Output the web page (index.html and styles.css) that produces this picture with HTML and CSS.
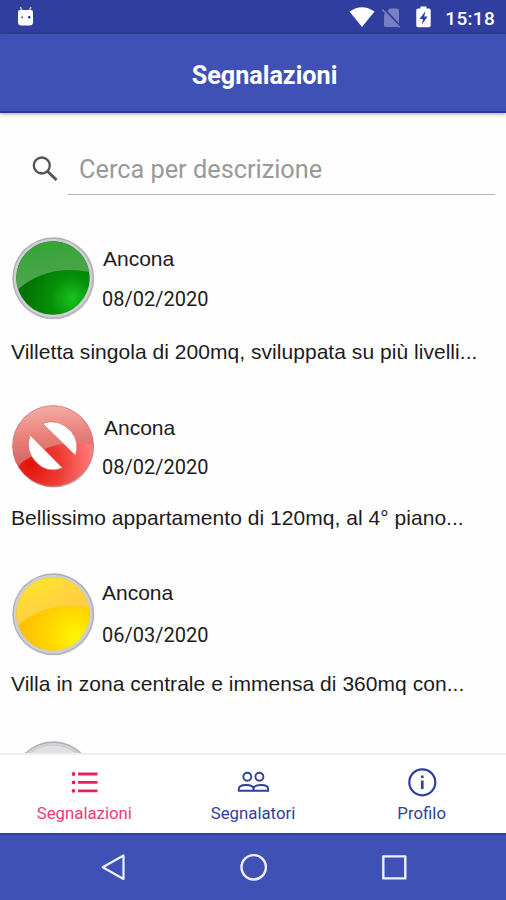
FILE: index.html
```html
<!DOCTYPE html>
<html lang="it">
<head>
  <meta charset="UTF-8">
  <meta name="viewport" content="width=device-width, initial-scale=1.0">
  <title>Segnalazioni</title>
  <link rel="stylesheet" href="styles.css">
</head>
<body>
  <div class="status-bar">
    <svg class="status-android" width="18" height="21" viewBox="0 0 18 21">
      <path d="M3.400 1l1.800 4M14 1l-1.800 4" stroke="#b9c0ea" stroke-width="1.600"/>
      <path d="M1 6q0-2 2-2h11q2 0 2 2v10q0 3.500-3.500 3.500h-8Q1 19.500 1 16z" fill="#fff"/>
      <circle cx="5.200" cy="11.300" r="1" fill="#5a5f98"/>
      <circle cx="12.200" cy="11.300" r="1.200" fill="#1f2b80"/>
    </svg>
    <div class="status-icons">
      <svg class="status-wifi" width="26" height="21" viewBox="0 0 26 21">
        <path d="M0.500 5.500Q13-3 25.500 5.500L13 21z" fill="#fff"/>
      </svg>
      <svg class="status-sim" width="19" height="21" viewBox="0 0 19 21">
        <path d="M2 6.500L7.500 0.500H15q2 0 2 2v15.500q0 1-2 1H4q-2 0-2-1.500z" fill="#7680c3"/>
        <path d="M1.800 0.800l17 18" stroke="#303f9f" stroke-width="2"/>
        <path d="M0.300 1.500l17.500 18" stroke="#7680c3" stroke-width="1.500"/>
      </svg>
      <svg class="status-battery" width="15" height="22" viewBox="0 0 15 22">
        <path d="M4.500 2.500V0.500h6v2H13q1.700 0 1.700 1.500v15.500q0 1.800-1.700 1.800H2q-1.700 0-1.700-1.800V4q0-1.500 1.700-1.500z" fill="#fff"/>
        <path d="M9.500 5L3.500 13h3.400l-1 5.500 5.700-8H8.200z" fill="#303f9f"/>
      </svg>
      <span class="status-time">15:18</span>
    </div>
  </div>

  <header class="toolbar">
    <h1 class="toolbar-title">Segnalazioni</h1>
  </header>

  <main class="content">
    <div class="search">
      <svg class="search-icon" width="26" height="26" viewBox="0 0 26 26" fill="none" stroke="#555">
        <circle cx="9.800" cy="9.500" r="8" stroke-width="2.300"/>
        <path d="M15.500 15.200l9 8.800" stroke-width="3"/>
      </svg>
      <input class="search-input" type="text" placeholder="Cerca per descrizione">
    </div>

    <ul class="list">
      <li class="item item-green">
        <div class="item-head">
          <svg class="badge" width="84" height="84" viewBox="0 0 84 84">
            <use href="#ring"/>
            <circle cx="42" cy="42" r="36.700" fill="url(#green)"/>
            <path d="M0 0H84V37Q33 25 0 60z" fill="url(#greenGloss)" clip-path="url(#face)"/>
          </svg>
          <div class="item-info">
            <div class="item-city">Ancona</div>
            <div class="item-date">08/02/2020</div>
          </div>
        </div>
        <p class="item-text">Villetta singola di 200mq, sviluppata su più livelli...</p>
      </li>
      <li class="item item-red">
        <div class="item-head">
          <svg class="badge" width="84" height="84" viewBox="0 0 84 84">
            <circle cx="42.600" cy="43" r="40.500" fill="#b9b0b0"/>
            <circle cx="42" cy="42" r="40.400" fill="url(#red)"/>
            <path d="M0 0H84V41Q58 37 42 42Q28 46 18 54Q11 57 6 64L0 70z" fill="url(#redGloss)" clip-path="url(#disc)"/>
            <circle cx="42" cy="42" r="40.400" fill="none" stroke="#cf7777" stroke-width="0.700"/>
            <path d="M31.500 19.500Q47 13.500 60 27Q69 38 64.500 51.500z" fill="#fff" stroke="#d56a66" stroke-width="0.700"/>
            <path d="M19 31L51.500 64Q36 70 25 58Q14 47 19 31z" fill="#fff" stroke="#d56a66" stroke-width="0.700"/>
          </svg>
          <div class="item-info">
            <div class="item-city">Ancona</div>
            <div class="item-date">08/02/2020</div>
          </div>
        </div>
        <p class="item-text">Bellissimo appartamento di 120mq, al 4° piano...</p>
      </li>
      <li class="item item-yellow">
        <div class="item-head">
          <svg class="badge" width="84" height="84" viewBox="0 0 84 84">
            <use href="#ring"/>
            <circle cx="42" cy="42" r="36.700" fill="url(#yellow)"/>
            <path d="M0 0H84V37Q33 25 0 60z" fill="url(#yellowGloss)" clip-path="url(#face)"/>
          </svg>
          <div class="item-info">
            <div class="item-city">Ancona</div>
            <div class="item-date">06/03/2020</div>
          </div>
        </div>
        <p class="item-text">Villa in zona centrale e immensa di 360mq con...</p>
      </li>
      <li class="item item-grey">
        <div class="item-head">
          <svg class="badge" width="84" height="84" viewBox="0 0 84 84">
            <use href="#ring"/>
            <circle cx="42" cy="42" r="36.700" fill="#e0e0e0"/>
          </svg>
        </div>
      </li>
    </ul>
  </main>

  <nav class="tabs">
    <a class="tab tab-active">
      <svg class="tab-icon" width="30" height="30" viewBox="0 0 30 30" fill="#e91e63">
        <circle cx="4.500" cy="6" r="1.900"/>
        <circle cx="4.500" cy="14.400" r="1.900"/>
        <circle cx="4.500" cy="22.800" r="1.900"/>
        <path d="M9 4.500h19.500v3H9zM9 13h19.500v2.800H9zM9 21.400h19.500v2.800H9z"/>
      </svg>
      <span class="tab-label">Segnalazioni</span>
    </a>
    <a class="tab">
      <svg class="tab-icon" width="34" height="30" viewBox="0 0 34 30" fill="none" stroke="#303f9f" stroke-width="1.900">
        <circle cx="11.300" cy="8.800" r="4"/>
        <circle cx="23.400" cy="8.800" r="4"/>
        <path d="M2.800 22.700v-1.800q0-3.900 7.200-3.900 7.500 0 7.500 3.900v1.800zM17.500 22.700h14.700v-1.800q0-3.900-7.200-3.900-7.500 0-7.500 3.900z"/>
      </svg>
      <span class="tab-label">Segnalatori</span>
    </a>
    <a class="tab">
      <svg class="tab-icon" width="30" height="30" viewBox="0 0 30 30">
        <circle cx="15.300" cy="14.300" r="13" fill="none" stroke="#303f9f" stroke-width="2.200"/>
        <path d="M14 7.600h2.600v2.500H14zM14 12.600h2.600v8.500H14z" fill="#303f9f"/>
      </svg>
      <span class="tab-label">Profilo</span>
    </a>
  </nav>

  <div class="nav-bar">
    <svg width="30" height="30" viewBox="0 0 30 30" fill="none" stroke="#eef0ff" stroke-width="2.200" stroke-linejoin="round">
      <path d="M24.500 2.500v23.500L3.700 14.200z"/>
    </svg>
    <svg width="30" height="30" viewBox="0 0 30 30" fill="none" stroke="#eef0ff" stroke-width="2.400">
      <circle cx="14.700" cy="14.300" r="12.200"/>
    </svg>
    <svg width="30" height="30" viewBox="0 0 30 30" fill="none" stroke="#eef0ff" stroke-width="2.400" stroke-linejoin="round">
      <rect x="4.300" y="3.400" width="22" height="22"/>
    </svg>
  </div>

  <!-- shared shapes and gradients for the status badges -->
  <svg class="defs" width="0" height="0">
    <defs>
      <clipPath id="face"><circle cx="42" cy="42" r="36.700"/></clipPath>
      <clipPath id="disc"><circle cx="42" cy="42" r="40.400"/></clipPath>
      <linearGradient id="ringFill" x1="0" y1="0" x2="0.600" y2="1">
        <stop offset="0" stop-color="#a9a9ae"/>
        <stop offset="1" stop-color="#b9b9bf"/>
      </linearGradient>
      <g id="ring">
        <circle cx="42.300" cy="42.300" r="41" fill="url(#ringFill)"/>
        <circle cx="42" cy="42" r="38" fill="none" stroke="#cfcfd6" stroke-width="2.500"/>
      </g>
      <radialGradient id="green" cx="0.760" cy="0.780" r="0.650">
        <stop offset="0" stop-color="#18c41e"/>
        <stop offset="0.450" stop-color="#079009"/>
        <stop offset="1" stop-color="#007300"/>
      </radialGradient>
      <linearGradient id="greenGloss" x1="0.300" y1="0" x2="0.400" y2="1">
        <stop offset="0" stop-color="#2fa52f"/>
        <stop offset="1" stop-color="#58a458"/>
      </linearGradient>
      <radialGradient id="yellow" cx="0.800" cy="0.800" r="0.700">
        <stop offset="0" stop-color="#fff500"/>
        <stop offset="0.500" stop-color="#ffd700"/>
        <stop offset="1" stop-color="#ffc000"/>
      </radialGradient>
      <linearGradient id="yellowGloss" x1="0.200" y1="0.100" x2="0.600" y2="0.800">
        <stop offset="0" stop-color="#ffe529"/>
        <stop offset="1" stop-color="#ffc94a"/>
      </linearGradient>
      <radialGradient id="red" cx="0.220" cy="0.720" r="0.750">
        <stop offset="0" stop-color="#e31208"/>
        <stop offset="0.500" stop-color="#ec3a32"/>
        <stop offset="1" stop-color="#f77"/>
      </radialGradient>
      <linearGradient id="redGloss" x1="0.300" y1="0" x2="0.400" y2="1">
        <stop offset="0" stop-color="#f7b0a8"/>
        <stop offset="0.450" stop-color="#e8827b"/>
        <stop offset="1" stop-color="#cf5a55"/>
      </linearGradient>
    </defs>
  </svg>
</body>
</html>
```
FILE: styles.css
```css
* {
  box-sizing: border-box;
}
body {
  display: flex;
  flex-direction: column;
  width: 506px;
  height: 900px;
  margin: 0;
  overflow: hidden;
  background: #fefefe;
  font-family: Roboto, sans-serif;
}
svg {
  display: block;
  flex: none;
}
.defs {
  position: absolute;
}
.status-bar {
  display: flex;
  justify-content: space-between;
  flex: none;
  height: 34px;
  padding: 6px 11px 0 17px;
  background: #303f9f;
}
.status-icons {
  display: flex;
}
.status-wifi {
  margin-right: 7px;
}
.status-sim {
  margin: 2px 15px 0 0;
}
.status-battery {
  margin-right: 14px;
}
.status-time {
  color: #fff;
  font-size: 19px;
  font-weight: 500;
  line-height: 25px;
  letter-spacing: 0.3px;
}
.toolbar {
  flex: none;
  height: 79px;
  padding-left: 23px;
  background: #3f51b5;
  border-bottom: 2px solid #2238a5;
  box-shadow: 0 1px 4px rgba(0, 0, 0, 0.35);
  text-align: center;
}
.toolbar-title {
  margin: 0;
  color: #fff;
  font-size: 25.2px;
  font-weight: 700;
  line-height: 83px;
}
.content {
  flex: 1;
  overflow: hidden;
  padding-top: 32px;
}
.search {
  display: flex;
  height: 50px;
  margin-left: 32px;
}
.search-icon {
  margin: 11px 10px 0 0;
}
.search-input {
  width: 427px;
  height: 50px;
  padding: 0 0 0 11px;
  border: 0;
  border-bottom: 1.5px solid #b4b4b4;
  background: none;
  font: 25.3px Roboto, sans-serif;
}
.search-input::placeholder {
  color: #999;
  opacity: 1;
}
.list {
  margin: 0;
  padding: 41px 0 0 11px;
  list-style: none;
}
.item {
  height: 168px;
  color: #1c1c1c;
}
.item-head {
  display: flex;
  height: 84px;
}
.item-info {
  padding: 11px 0 0 7px;
}
.item-city {
  height: 40px;
  padding-left: 1px;
  font: 21px/24px "Liberation Sans", Arial, sans-serif;
}
.item-date {
  font-size: 20px;
  line-height: 24px;
}
.item-text {
  margin: 20px 0 0;
  font: 21px/24px "Liberation Sans", Arial, sans-serif;
  letter-spacing: 0.04px;
  white-space: nowrap;
}
.item-red .item-info {
  padding-top: 12px;
}
.item-red .item-city {
  height: 39px;
  padding-left: 2px;
}
.item-red .item-text {
  margin-top: 18px;
}
.item-yellow .item-info {
  padding-top: 9px;
}
.item-yellow .item-city {
  height: 42px;
  padding-left: 0;
}
.item-yellow .item-text {
  margin-top: 16px;
}
.tabs {
  display: flex;
  flex: none;
  height: 80px;
  background: #fff;
  border-top: 2px solid #f0f0f0;
}
.tab {
  display: flex;
  flex: 1;
  flex-direction: column;
  align-items: center;
  padding-top: 13px;
  color: #303f9f;
}
.tab-active {
  color: #f03a7a;
}
.tab-label {
  font-size: 16.8px;
  line-height: 22px;
  margin-top: 4px;
}
.nav-bar {
  display: flex;
  justify-content: center;
  gap: 110px;
  flex: none;
  height: 67px;
  padding: 18px 0 0 1px;
  background: #3f51b5;
  border-top: 2px solid #2d3fa8;
}
```
